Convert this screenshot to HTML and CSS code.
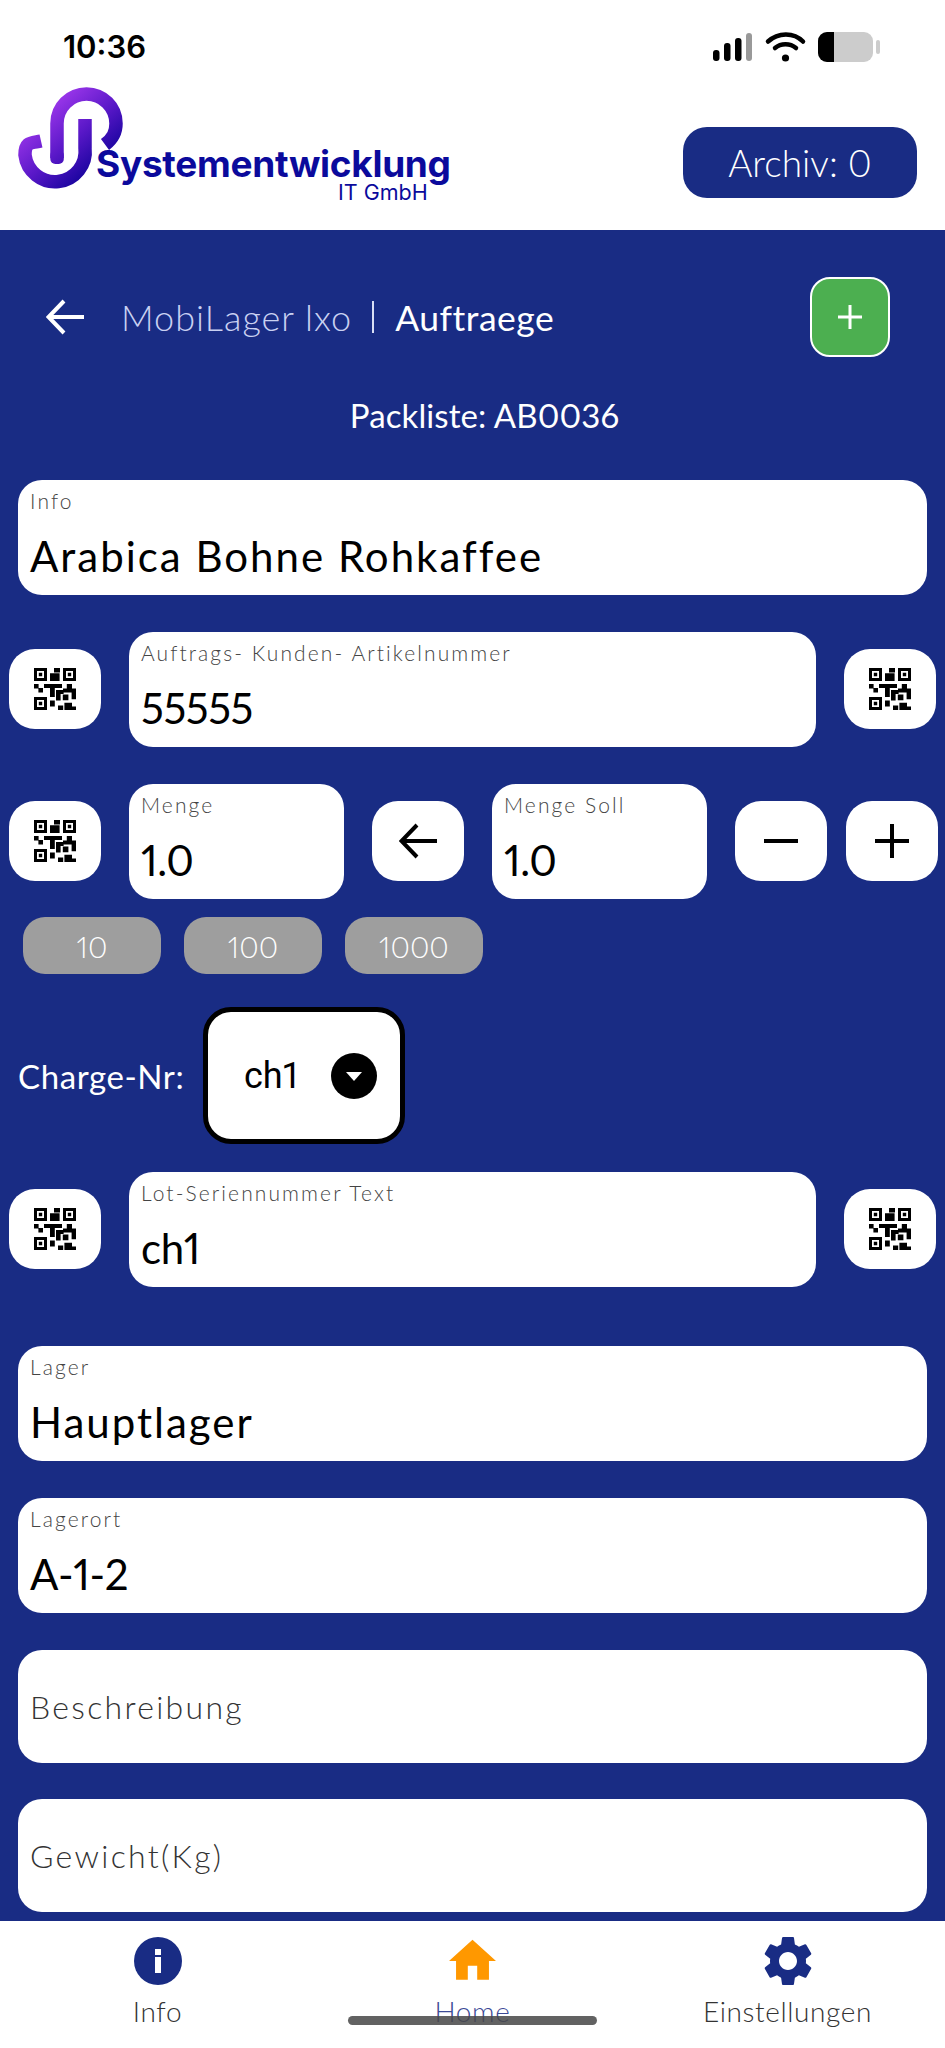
FILE: index.html
```html
<!DOCTYPE html>
<html lang="de">
<head>
<meta charset="utf-8">
<title>MobiLager lxo</title>
<link rel="stylesheet" href="styles.css">
</head>
<body>
<svg class="defs" width="0" height="0" aria-hidden="true">
  <symbol id="qr" viewBox="0 0 21 21">
    <path fill-rule="evenodd" d="M0 0h6.500v6.500H0zM1.500 1.500v3.500h3.500V1.500zM2.400 2.400h1.700v1.700H2.400zM14.500 0H21v6.500h-6.500zM16 1.500v3.500h3.500V1.500zM16.900 2.400h1.700v1.700h-1.700zM0 14.500h6.500V21H0zM1.500 16v3.500h3.500V16zM2.400 16.900h1.700v1.700H2.400z"/>
    <path d="M10 0h3v2.200h-3zM8 2.600h4.800v3.900H8zM0 8h2.300v2.200H0zM5 8h9v2H5zM2.200 10h2.300v2.200H2.200zM8 9.500h2.400v5H8zM11 11h3.800v2H11zM16.400 8H19v2.200h-2.600zM14.500 10.200H21v2h-6.500zM18.800 12h2.200v3.600h-2.200zM11 12.600h2.300v3.600H11zM14.400 13.300h2.800v2.800h-2.800zM8 16.200h2.400v3H8zM12 18.700h2.600V21H12zM15.200 17.400H19v1.800h2V21h-5.800z"/>
  </symbol>
</svg>

<header class="topbar">
  <div class="status">
    <span class="time">10:36</span>
    <svg class="status-icons" width="167" height="30" viewBox="0 0 167 30" aria-hidden="true">
      <rect x="0" y="18" width="6.500" height="11" rx="3" fill="#000"/>
      <rect x="11" y="11" width="6.500" height="18" rx="3" fill="#000"/>
      <rect x="22" y="6" width="6.500" height="23" rx="3" fill="#000"/>
      <rect x="33" y="1" width="6" height="28" rx="3" fill="#999"/>
      <path d="M55 9.500C65 0 81 0 90 9.500" fill="none" stroke="#000" stroke-width="4.500" stroke-linecap="round"/>
      <path d="M62 16c6-5 15-5 21 0" fill="none" stroke="#000" stroke-width="4.500" stroke-linecap="round"/>
      <circle cx="72.500" cy="26" r="3.600" fill="#000"/>
      <rect x="105" y="0" width="55" height="30" rx="9" fill="#ccc"/>
      <path d="M114 0h7v30h-7a9 9 0 0 1-9-9V9a9 9 0 0 1 9-9z" fill="#000"/>
      <rect x="163" y="8" width="4" height="14" rx="2" fill="#ccc"/>
    </svg>
  </div>
  <div class="brand-row">
    <div class="logo">
      <svg class="logo-mark" width="105" height="105" viewBox="18 87 105 105" aria-hidden="true">
        <defs>
          <linearGradient id="lg" gradientUnits="userSpaceOnUse" x1="40" y1="95" x2="105" y2="170">
            <stop offset="0" stop-color="#b040f5"/>
            <stop offset="0.55" stop-color="#5a18c8"/>
            <stop offset="1" stop-color="#0c0096"/>
          </linearGradient>
        </defs>
        <path d="M57 158V123.500a29.500 29.500 0 0 1 59 0c0 9-3 15-11 21" fill="none" stroke="url(#lg)" stroke-width="13.500"/>
        <path d="M41 141c-9 2-16 0-16 14a30 30 0 0 0 60 -7V119" fill="none" stroke="url(#lg)" stroke-width="13.500"/>
        <rect x="50.300" y="150" width="13.500" height="14" rx="5" fill="url(#lg)"/>
      </svg>
      <div class="logo-text">
        <div class="logo-name">Systementwicklung</div>
        <div class="logo-sub">IT GmbH</div>
      </div>
    </div>
    <div class="archive">Archiv: 0</div>
  </div>
</header>

<main class="content">
  <div class="nav-row">
    <svg class="nav-back" width="38" height="36" viewBox="0 0 38 36" aria-hidden="true">
      <path d="M38 18H3M18 2L2.500 18 18 34" fill="none" stroke="#fff" stroke-width="4"/>
    </svg>
    <span class="nav-app">MobiLager lxo</span>
    <span class="nav-sep"></span>
    <span class="nav-page">Auftraege</span>
    <div class="add-btn">
      <svg width="26" height="26" viewBox="0 0 26 26" aria-hidden="true"><path d="M13 1v24M1 13h24" stroke="#fff" stroke-width="3"/></svg>
    </div>
  </div>

  <div class="packlist">Packliste: AB0036</div>

  <div class="field field-full gap-info">
    <div class="field-label">Info</div>
    <div class="field-value">Arabica Bohne Rohkaffee</div>
  </div>

  <div class="row gap-order">
    <div class="icon-btn"><svg class="qr" viewBox="0 0 21 21"><use href="#qr"/></svg></div>
    <div class="field field-grow">
      <div class="field-label">Auftrags- Kunden- Artikelnummer</div>
      <div class="field-value value-tight">55555</div>
    </div>
    <div class="icon-btn"><svg class="qr" viewBox="0 0 21 21"><use href="#qr"/></svg></div>
  </div>

  <div class="row gap-order">
    <div class="icon-btn"><svg class="qr" viewBox="0 0 21 21"><use href="#qr"/></svg></div>
    <div class="field field-qty">
      <div class="field-label">Menge</div>
      <div class="field-value value-tight">1.0</div>
    </div>
    <div class="icon-btn">
      <svg width="38" height="36" viewBox="0 0 38 36" aria-hidden="true"><path d="M38 18H3M18 2L2.500 18 18 34" fill="none" stroke="#000" stroke-width="4"/></svg>
    </div>
    <div class="field field-qty">
      <div class="field-label">Menge Soll</div>
      <div class="field-value value-tight">1.0</div>
    </div>
    <div class="step-group">
      <div class="icon-btn">
        <svg width="34" height="34" viewBox="0 0 34 34" aria-hidden="true"><path d="M0 17h34" stroke="#000" stroke-width="4"/></svg>
      </div>
      <div class="icon-btn">
        <svg width="34" height="34" viewBox="0 0 34 34" aria-hidden="true"><path d="M0 17h34M17 0v34" stroke="#000" stroke-width="4"/></svg>
      </div>
    </div>
  </div>

  <div class="chips">
    <div class="chip">10</div>
    <div class="chip">100</div>
    <div class="chip">1000</div>
  </div>

  <div class="charge-row">
    <span class="charge-label">Charge-Nr:</span>
    <div class="select">
      <span class="select-value">ch1</span>
      <span class="select-arrow"></span>
    </div>
  </div>

  <div class="row gap-lot">
    <div class="icon-btn"><svg class="qr" viewBox="0 0 21 21"><use href="#qr"/></svg></div>
    <div class="field field-grow">
      <div class="field-label">Lot-Seriennummer Text</div>
      <div class="field-value value-tight">ch1</div>
    </div>
    <div class="icon-btn"><svg class="qr" viewBox="0 0 21 21"><use href="#qr"/></svg></div>
  </div>

  <div class="field field-full gap-store">
    <div class="field-label">Lager</div>
    <div class="field-value">Hauptlager</div>
  </div>
  <div class="field field-full gap-order">
    <div class="field-label">Lagerort</div>
    <div class="field-value value-tight">A-1-2</div>
  </div>
  <div class="field field-full field-empty gap-order">Beschreibung</div>
  <div class="field field-full field-empty gap-weight">Gewicht(Kg)</div>
</main>

<nav class="tabbar">
  <div class="tab">
    <svg class="tab-icon" width="48" height="48" viewBox="0 0 48 48" aria-hidden="true">
      <circle cx="24" cy="24" r="24" fill="#192c84"/>
      <rect x="21" y="12" width="6" height="6" fill="#fff"/>
      <rect x="21" y="20" width="6" height="16" fill="#fff"/>
    </svg>
    <span class="tab-label">Info</span>
  </div>
  <div class="tab tab-active">
    <svg class="tab-icon" width="47" height="48" viewBox="2 1.800 20 20.400" aria-hidden="true">
      <path d="M10 20v-6h4v6h5v-8h3L12 3 2 12h3v8z" fill="#ff9800"/>
    </svg>
    <span class="tab-label">Home</span>
  </div>
  <div class="tab">
    <svg class="tab-icon" width="48" height="48" viewBox="2.400 2.400 19.200 19.200" aria-hidden="true">
      <path fill="#192c84" d="M19.140 12.940c.04-.3.06-.61.06-.94 0-.32-.02-.64-.07-.94l2.030-1.580c.18-.14.23-.41.12-.61l-1.920-3.320c-.12-.22-.37-.29-.59-.22l-2.390.96c-.5-.38-1.030-.7-1.620-.94L14.400 2.810c-.04-.24-.24-.41-.48-.41h-3.840c-.24 0-.43.17-.47.41L9.250 5.350c-.59.24-1.130.57-1.620.94L5.240 5.330c-.22-.08-.47 0-.59.22L2.740 8.870c-.12.21-.08.47.12.61l2.030 1.580c-.05.3-.09.63-.09.94s.02.64.07.94l-2.030 1.580c-.18.14-.23.41-.12.61l1.920 3.320c.12.22.37.29.59.22l2.390-.96c.5.38 1.030.7 1.620.94l.36 2.540c.05.24.24.41.48.41h3.840c.24 0 .44-.17.47-.41l.36-2.540c.59-.24 1.130-.56 1.620-.94l2.390.96c.22.08.47 0 .59-.22l1.920-3.320c.12-.22.07-.47-.12-.61l-2.010-1.580zM12 15.600c-1.980 0-3.600-1.620-3.600-3.600s1.620-3.600 3.600-3.600 3.600 1.620 3.600 3.600-1.620 3.600-3.600 3.600z"/>
    </svg>
    <span class="tab-label">Einstellungen</span>
  </div>
  <div class="home-indicator"></div>
</nav>
</body>
</html>
```
FILE: styles.css
```css
* { box-sizing: border-box; }
html, body { margin: 0; padding: 0; }
body {
  width: 945px;
  height: 2048px;
  overflow: hidden;
  display: flex;
  flex-direction: column;
  background: #192c84;
  font-family: "Lato", "Noto Sans", sans-serif;
  font-weight: 300;
  font-variant-numeric: proportional-nums;
  color: #000;
}
.defs { position: absolute; }

/* header */
.topbar { height: 230px; background: #fff; padding-top: 31px; flex: none; }
.status { height: 32px; display: flex; justify-content: space-between; align-items: center; padding: 0 65px 0 63px; }
.time { font-family: "Inter", sans-serif; font-weight: 600; font-size: 31px; line-height: 32px; }
.status-icons { display: block; }
.brand-row { margin-top: 24px; padding: 0 28px 0 18px; display: flex; justify-content: space-between; align-items: flex-start; }
.logo { display: flex; align-items: flex-start; }
.logo-mark { flex: none; display: block; }
.logo-text { margin: 60px 0 0 -27px; color: #0b0a9c; text-align: right; }
.logo-name { font-family: "Inter", sans-serif; font-weight: 700; font-size: 37px; line-height: 34px; letter-spacing: -0.3px; }
.logo-sub { font-family: "Inter", sans-serif; font-weight: 400; font-size: 21.500px; line-height: 22px; padding-right: 23px; }
.archive { margin-top: 40px; width: 234px; height: 71px; border-radius: 24px; background: #192c84; color: #fff; display: flex; align-items: center; justify-content: center; font-size: 37px; }

/* content */
.content { flex: 1; padding: 47px 9px 0; display: flex; flex-direction: column; min-height: 0; overflow: hidden; }
.nav-row { height: 80px; display: flex; align-items: center; padding-left: 37px; padding-right: 46px; flex: none; }
.nav-back { flex: none; }
.nav-app { margin-left: 37px; font-size: 36px; color: #c9d1f2; letter-spacing: 1px; }
.nav-sep { width: 2px; height: 32px; background: #d8def5; margin: 0 21px 0 20px; }
.nav-page { font-size: 35.500px; font-weight: 400; color: #fff; letter-spacing: 0.5px; }
.add-btn { margin-left: auto; width: 80px; height: 80px; border: 2px solid #fff; border-radius: 20px; background: #4caf50; display: flex; align-items: center; justify-content: center; }
.add-btn svg { display: block; }
.packlist { margin-top: 38px; height: 40px; line-height: 40px; padding-left: 24px; font-size: 33px; font-weight: 400; color: #fff; text-align: center; flex: none; letter-spacing: 0.1px; }

.field { background: #fff; border-radius: 24px; height: 115px; padding: 9px 12px 0; flex: none; }
.field-full { margin-left: 9px; margin-right: 9px; padding-left: 12px; }
.field-grow { flex: 1; }
.field-qty { width: 215px; }
.field-label { font-size: 21px; line-height: 24px; color: #444; letter-spacing: 2.100px; }
.field-value { margin-top: 18px; font-size: 42px; line-height: 50px; font-weight: 400; letter-spacing: 2px; }
.value-tight { letter-spacing: -0.400px; }
.field-empty { height: 113px; padding-top: 0; display: flex; align-items: center; font-size: 32px; color: #333; letter-spacing: 2.300px; }

.gap-info { margin-top: 45px; }
.gap-order { margin-top: 37px; }
.gap-lot { margin-top: 28px; }
.gap-store { margin-top: 59px; }
.gap-weight { margin-top: 36px; }

.row { display: flex; align-items: flex-start; gap: 28px; flex: none; }
.icon-btn { width: 92px; height: 80px; margin-top: 17px; border-radius: 26px; background: #fff; display: flex; align-items: center; justify-content: center; flex: none; }
.qr { width: 42px; height: 42px; display: block; }
.step-group { display: flex; gap: 19px; }

.chips { display: flex; gap: 23px; margin: 18px 0 0 14px; flex: none; }
.chip { width: 138px; height: 57px; border-radius: 22px; background: #9e9e9e; color: #fff; font-size: 30px; display: flex; align-items: center; justify-content: center; }

.charge-row { display: flex; align-items: center; margin: 33px 0 0 9px; flex: none; }
.charge-label { width: 185px; color: #fff; font-size: 33px; font-weight: 400; letter-spacing: 0.6px; }
.select { width: 202px; height: 137px; border: 5px solid #000; border-radius: 28px; background: #fff; display: flex; align-items: center; padding-left: 36px; }
.select-value { font-family: "Roboto", sans-serif; font-weight: 400; font-size: 36px; width: 87px; }
.select-arrow { width: 46px; height: 46px; border-radius: 50%; background: #000; position: relative; }
.select-arrow::after { content: ""; position: absolute; left: 15px; top: 19px; border-style: solid; border-width: 9px 8px 0; border-color: #fff transparent transparent; }

/* tabs */
.tabbar { height: 127px; background: #fff; display: grid; grid-template-columns: repeat(3, 1fr); position: relative; flex: none; }
.tab { display: flex; flex-direction: column; align-items: center; padding-top: 16px; }
.tab-icon { display: block; }
.tab-label { margin-top: 9px; font-size: 28px; line-height: 34px; color: #333; letter-spacing: 0.6px; }
.tab-active .tab-label { color: #3c4a96; }
.home-indicator { position: absolute; left: 348px; top: 95px; width: 249px; height: 9px; border-radius: 5px; background: rgba(70, 70, 70, 0.85); }
```
